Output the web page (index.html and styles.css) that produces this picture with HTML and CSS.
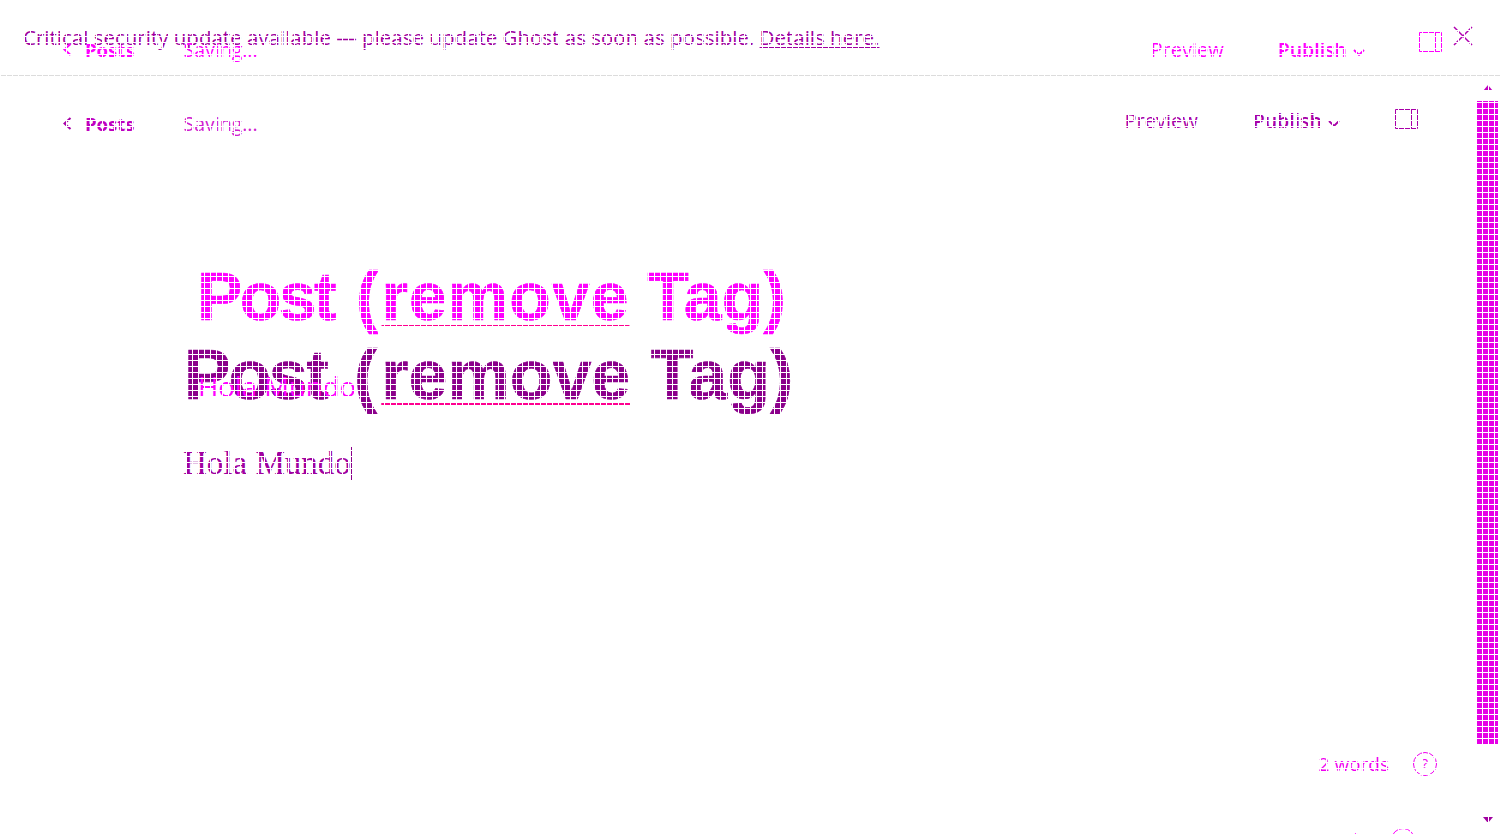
FILE: index.html
```html
<!DOCTYPE html>
<html lang="en">
<head>
    <meta charset="UTF-8">
    <title>Editor</title>
    <link rel="stylesheet" href="styles.css">
</head>
<body>
    <div class="page">
        <div class="notice">
            <span>Critical security update available &mdash; please update Ghost as soon as possible. <a href="#">Details here.</a></span>
        </div>
        <div class="content">
            <div class="main">
                <div class="editor">
                    <div class="editor-head">
                        <div class="head-left">
                            <span class="back"><svg width="9" height="13" viewBox="0 0 9 13"><path d="M7.500 1 1.500 6.500 7.500 12" fill="none" stroke="currentColor" stroke-width="2"/></svg></span>
                            <b class="posts">Posts</b>
                            <span class="saving">Saving...</span>
                        </div>
                        <div class="head-right">
                            <span class="preview">Preview</span>
                            <span class="publish">Publish<svg width="12" height="7" viewBox="0 0 12 7"><path d="M1 1 6 6 11 1" fill="none" stroke="currentColor" stroke-width="1.800"/></svg></span>
                            <svg class="split" width="23" height="20" viewBox="0 0 23 20"><path d="M.5.5h22v19H.5zM16.500.5v19" fill="none" stroke="currentColor"/></svg>
                        </div>
                    </div>
                    <h1 class="title"><span class="word">Post</span> <span class="paren">(</span><u>remove</u> Tag)</h1>
                    <p class="body-text">Hola Mundo<i class="caret"></i></p>
                </div>
                <div class="foot">
                    <span class="words">2 words</span>
                    <span class="help">?</span>
                </div>
            </div>
            <div class="scrollbar">
                <svg width="10" height="6" viewBox="0 0 10 6"><path d="M5 0 10 6H0z" fill="currentColor"/></svg>
                <div class="thumb"></div>
                <svg class="arrow-down" width="10" height="6" viewBox="0 0 10 6"><path d="M0 0h10L5 6z" fill="currentColor"/></svg>
            </div>
        </div>

        <div class="ghost">
            <div class="ghost-head">
                <div class="head-left">
                    <span class="back"><svg width="9" height="13" viewBox="0 0 9 13"><path d="M7.500 1 1.500 6.500 7.500 12" fill="none" stroke="currentColor" stroke-width="2"/></svg></span>
                    <b class="posts">Posts</b>
                    <span class="saving">Saving...</span>
                </div>
                <div class="head-right">
                    <span class="preview">Preview</span>
                    <span class="publish">Publish<svg width="12" height="7" viewBox="0 0 12 7"><path d="M1 1 6 6 11 1" fill="none" stroke="currentColor" stroke-width="1.800"/></svg></span>
                    <svg class="split" width="23" height="20" viewBox="0 0 23 20"><path d="M.5.5h22v19H.5zM16.500.5v19" fill="none" stroke="currentColor"/></svg>
                </div>
            </div>
            <svg class="close" width="20" height="20" viewBox="0 0 20 20"><path d="M1 1 19 19M19 1 1 19" stroke="currentColor" stroke-width="1.500"/></svg>
            <h1 class="ghost-title"><span class="word">Post</span> <span class="paren">(</span><u>remove</u> Tag)</h1>
            <p class="ghost-body">Hola Mundo</p>
        </div>
        <div class="ghost-foot">
            <span class="words">2 words</span>
            <span class="help">?</span>
        </div>

        <div class="grid"></div>
    </div>
</body>
</html>
```

FILE: styles.css
```css
html, body {
    margin: 0;
    height: 100%;
    overflow: hidden;
    background: #fff;
}
body {
    font-family: "Open Sans", "Noto Sans", sans-serif;
}
.page {
    position: relative;
    display: flex;
    flex-direction: column;
    width: 1500px;
    height: 834px;
    overflow: hidden;
}
.notice {
    height: 76px;
    box-sizing: border-box;
    padding: 25px 0 0 23px;
    border-bottom: 1px solid #dcdcdc;
    font-size: 20.500px;
    line-height: 24px;
    color: #a000a0;
}
.notice a {
    color: #a000a0;
}
.content {
    flex: 1;
    display: flex;
}
.main {
    flex: 1;
    display: flex;
    flex-direction: column;
}
.editor {
    flex: 1;
    padding: 0 59px 0 62px;
    color: #a800a8;
}
.editor-head {
    display: flex;
    justify-content: space-between;
    align-items: center;
    height: 94px;
}
.head-left, .head-right {
    display: flex;
    align-items: center;
}
.editor-head .head-right {
    padding-bottom: 6px;
}
.back {
    display: flex;
    padding-left: 1px;
    margin-right: 13px;
}
.posts {
    font-size: 18.500px;
    font-weight: 700;
    color: #c000c0;
    margin-right: 49px;
}
.saving {
    font-size: 19.500px;
    color: #d020d0;
}
.preview {
    font-size: 20px;
    margin-right: 55px;
}
.publish {
    font-size: 19.500px;
    font-weight: 600;
    margin-right: 55px;
}
.publish svg {
    margin-left: 6px;
    vertical-align: 1px;
}
.split {
    margin-bottom: 2px;
    color: #a800a8;
}
.title {
    margin: 169px 0 0 122px;
    font-family: "Liberation Sans", Arial, sans-serif;
    font-size: 70px;
    line-height: 72px;
    font-weight: 700;
    color: #8b008b;
    -webkit-text-stroke: 0.6px #8b008b;
}
.title .word {
    letter-spacing: -2.300px;
    margin-right: 8px;
}
.title .paren {
    margin-right: 4px;
}
.title u, .ghost-title u {
    text-decoration: underline 2px #ff0090;
    text-underline-offset: 4px;
    text-decoration-skip-ink: none;
}
.title u {
    margin-right: 1px;
}
.body-text {
    margin: 32px 0 0 121px;
    font-family: "Liberation Serif", serif;
    font-size: 33px;
    line-height: 40px;
    color: #a000a0;
}
.caret {
    display: inline-block;
    width: 1px;
    height: 33px;
    background: #8b008b;
    vertical-align: -6px;
}
.foot {
    display: flex;
    justify-content: flex-end;
    align-items: center;
    height: 50px;
    margin-bottom: 45px;
    padding-right: 40px;
    color: #f000f0;
}
.words {
    font-size: 19px;
    margin-right: 24px;
}
.help {
    width: 24px;
    height: 24px;
    border: 1px solid currentColor;
    border-radius: 50%;
    box-sizing: border-box;
    text-align: center;
    font-size: 14px;
    line-height: 22px;
}
.scrollbar {
    width: 23px;
    display: flex;
    flex-direction: column;
    align-items: center;
    padding: 9px 2px 0 0;
    box-sizing: border-box;
    color: #c000c0;
}
.thumb {
    width: 21px;
    height: 644px;
    margin-top: 10px;
    background: #e600e6;
}
.arrow-down {
    margin-top: 72px;
    color: #a000a0;
}
.ghost, .ghost-foot {
    position: absolute;
    color: #ff00ff;
}
.ghost {
    top: 0;
    left: 0;
    width: 1477px;
}
.ghost-head {
    display: flex;
    justify-content: space-between;
    align-items: center;
    height: 98px;
    padding: 0 35px 0 62px;
}
.ghost .posts, .ghost .saving, .ghost .split {
    color: #ff00ff;
}
.ghost .split {
    margin-bottom: 14px;
}
.ghost .preview {
    margin-right: 54px;
}
.ghost .publish {
    margin-right: 54px;
}
.close {
    position: absolute;
    top: 26px;
    right: 4px;
    color: #b000b0;
}
.ghost-title {
    margin: 162px 0 0 197px;
    font-family: "Liberation Sans", Arial, sans-serif;
    font-size: 68px;
    line-height: 72px;
    font-weight: 700;
    -webkit-text-stroke: 0.6px #ff00ff;
}
.ghost-title .word {
    letter-spacing: -2.600px;
    margin-right: 3px;
}
.ghost-title .paren {
    margin-right: 3px;
}
.ghost-title u {
    letter-spacing: 1px;
    margin-right: -1px;
}
.ghost-body {
    margin: 37px 0 0 198px;
    font-size: 27.500px;
    line-height: 36px;
}
.ghost-foot {
    top: 827px;
    left: 1297px;
    display: flex;
    align-items: center;
}
.grid {
    position: absolute;
    top: 0;
    left: 0;
    right: 0;
    bottom: 0;
    pointer-events: none;
    background-image:
        repeating-linear-gradient(to right, #fff 0, #fff 1px, transparent 1px, transparent 6px),
        repeating-linear-gradient(to bottom, #fff 0, #fff 1px, transparent 1px, transparent 6px);
}
```
